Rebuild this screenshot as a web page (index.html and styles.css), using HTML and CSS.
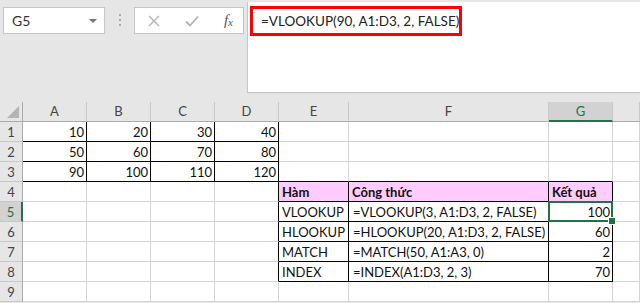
FILE: index.html
```html
<!DOCTYPE html>
<html lang="vi">
<head>
    <meta charset="UTF-8">
    <title>VLOOKUP</title>
    <link rel="stylesheet" href="styles.css">
</head>
<body>
    <div class="toolbar">
        <div class="namebox">
            <span>G5</span>
            <span class="arrow"></span>
        </div>
        <div class="dots"><i></i><i></i><i></i></div>
        <div class="fxbox">
            <svg width="12" height="12" viewBox="0 0 12 12"><path d="M1 1 L11 11 M11 1 L1 11" stroke="#b3b3b3" stroke-width="1.4" fill="none"/></svg>
            <svg width="14" height="12" viewBox="0 0 14 12"><path d="M1 6.5 L5 10.5 L13 1.5" stroke="#b3b3b3" stroke-width="1.8" fill="none"/></svg>
            <span class="fx">f<sub>x</sub></span>
        </div>
        <div class="formula">
            <div class="highlight">=VLOOKUP(90, A1:D3, 2, FALSE)</div>
        </div>
    </div>

    <div class="sheet">
        <div class="hd corner"><span class="tri"></span></div>
        <div class="hd">A</div>
        <div class="hd">B</div>
        <div class="hd">C</div>
        <div class="hd">D</div>
        <div class="hd">E</div>
        <div class="hd">F</div>
        <div class="hd active-col">G</div>
        <div class="hd"></div>

        <div class="rh">1</div>
        <div class="c n b">10</div>
        <div class="c n b">20</div>
        <div class="c n b">30</div>
        <div class="c n b">40</div>
        <div class="c"></div>
        <div class="c"></div>
        <div class="c"></div>
        <div class="c"></div>

        <div class="rh">2</div>
        <div class="c n b">50</div>
        <div class="c n b">60</div>
        <div class="c n b">70</div>
        <div class="c n b">80</div>
        <div class="c"></div>
        <div class="c"></div>
        <div class="c"></div>
        <div class="c"></div>

        <div class="rh">3</div>
        <div class="c n b">90</div>
        <div class="c n b">100</div>
        <div class="c n b">110</div>
        <div class="c n b">120</div>
        <div class="c bb"></div>
        <div class="c bb"></div>
        <div class="c bb"></div>
        <div class="c"></div>

        <div class="rh">4</div>
        <div class="c"></div>
        <div class="c"></div>
        <div class="c"></div>
        <div class="c br"></div>
        <div class="c b th">Hàm</div>
        <div class="c b th">Công thức</div>
        <div class="c b th">Kết quả</div>
        <div class="c"></div>

        <div class="rh active-row">5</div>
        <div class="c"></div>
        <div class="c"></div>
        <div class="c"></div>
        <div class="c br"></div>
        <div class="c b">VLOOKUP</div>
        <div class="c b f">=VLOOKUP(3, A1:D3, 2, FALSE)</div>
        <div class="c b n selected">100</div>
        <div class="c"></div>

        <div class="rh">6</div>
        <div class="c"></div>
        <div class="c"></div>
        <div class="c"></div>
        <div class="c br"></div>
        <div class="c b">HLOOKUP</div>
        <div class="c b f">=HLOOKUP(20, A1:D3, 2, FALSE)</div>
        <div class="c b n">60</div>
        <div class="c"></div>

        <div class="rh">7</div>
        <div class="c"></div>
        <div class="c"></div>
        <div class="c"></div>
        <div class="c br"></div>
        <div class="c b">MATCH</div>
        <div class="c b f">=MATCH(50, A1:A3, 0)</div>
        <div class="c b n">2</div>
        <div class="c"></div>

        <div class="rh">8</div>
        <div class="c"></div>
        <div class="c"></div>
        <div class="c"></div>
        <div class="c br"></div>
        <div class="c b">INDEX</div>
        <div class="c b f">=INDEX(A1:D3, 2, 3)</div>
        <div class="c b n">70</div>
        <div class="c"></div>

        <div class="rh">9</div>
        <div class="c"></div>
        <div class="c"></div>
        <div class="c"></div>
        <div class="c"></div>
        <div class="c"></div>
        <div class="c"></div>
        <div class="c"></div>
        <div class="c"></div>
    </div>
</body>
</html>
```

FILE: styles.css
```css
* {
    box-sizing: border-box;
}

body {
    margin: 0;
    background-color: #e6e6e6;
    font-family: Lato, "Open Sans", sans-serif;
    font-size: 13px;
    color: #111;
    overflow: hidden;
}

.toolbar {
    display: flex;
    align-items: flex-start;
    height: 102px;
}

.namebox {
    display: flex;
    align-items: center;
    justify-content: space-between;
    width: 102px;
    height: 27px;
    margin: 7px 0 0 3px;
    padding: 0 7px 0 8px;
    background-color: #fff;
    border: 1px solid #c6c6c6;
    color: #333;
    font-size: 14px;
}

.arrow {
    width: 0;
    height: 0;
    border-left: 4px solid transparent;
    border-right: 4px solid transparent;
    border-top: 4px solid #777;
}

.dots {
    display: flex;
    flex-direction: column;
    gap: 3px;
    margin: 14px 13px 0 14px;
}

.dots i {
    width: 2px;
    height: 2px;
    background-color: #aaa;
}

.fxbox {
    display: flex;
    align-items: center;
    justify-content: space-between;
    width: 110px;
    height: 27px;
    margin-top: 7px;
    padding: 0 10px 0 13px;
    background-color: #fff;
    border: 1px solid #c6c6c6;
}

.fx {
    font-family: "Liberation Serif", serif;
    font-style: italic;
    font-size: 15px;
    color: #555;
}

.fx sub {
    font-size: 11px;
    vertical-align: -1px;
}

.formula {
    flex: 1;
    height: 91px;
    margin: 2px 0 0 3px;
    padding: 4px 0 0 2px;
    background-color: #fff;
    border-left: 1px solid #c6c6c6;
    border-bottom: 1px solid #c6c6c6;
}

.highlight {
    width: 212px;
    height: 30px;
    padding-left: 8px;
    line-height: 24px;
    border: 3px solid #ff0000;
    color: #222;
    font-size: 13.5px;
    white-space: nowrap;
}

.sheet {
    display: grid;
    grid-template-columns: 23px 64px 64px 64px 64px 70px 200px 64px 1fr;
    grid-auto-rows: 20px;
    background-color: #fff;
}

.hd {
    background-color: #e6e6e6;
    border-right: 1px solid #c8c8c8;
    border-bottom: 1px solid #ababab;
    text-align: center;
    line-height: 19px;
    color: #444;
}

.corner {
    position: relative;
    border-right-color: #ababab;
}

.tri {
    position: absolute;
    right: 3px;
    bottom: 3px;
    width: 0;
    height: 0;
    border-left: 12px solid transparent;
    border-bottom: 12px solid #b4b4b4;
}

.active-col {
    background-color: #d2d2d2;
    border-bottom: 2px solid #217346;
    color: #217346;
}

.rh {
    background-color: #e6e6e6;
    border-right: 1px solid #ababab;
    border-bottom: 1px solid #c8c8c8;
    text-align: center;
    line-height: 20px;
    color: #444;
}

.active-row {
    background-color: #d2d2d2;
    border-right: 2px solid #217346;
    color: #217346;
}

.c {
    position: relative;
    padding: 0 3px;
    border-right: 1px solid #d4d4d4;
    border-bottom: 1px solid #d4d4d4;
    line-height: 21px;
    white-space: nowrap;
}

.n {
    text-align: right;
    padding-right: 2px;
}

.f {
    padding-left: 4px;
}

.b {
    border-right-color: #000;
    border-bottom-color: #000;
}

.br {
    border-right-color: #000;
}

.bb {
    border-bottom-color: #000;
}

.th {
    background-color: #ffccff;
    font-weight: bold;
}

.selected::after {
    content: "";
    position: absolute;
    top: -1px;
    left: -1px;
    right: -1px;
    bottom: -1px;
    border: 2px solid #217346;
}

.selected::before {
    content: "";
    position: absolute;
    right: -4px;
    bottom: -4px;
    width: 6px;
    height: 6px;
    background-color: #217346;
    border: 1px solid #fff;
    z-index: 1;
}
```
